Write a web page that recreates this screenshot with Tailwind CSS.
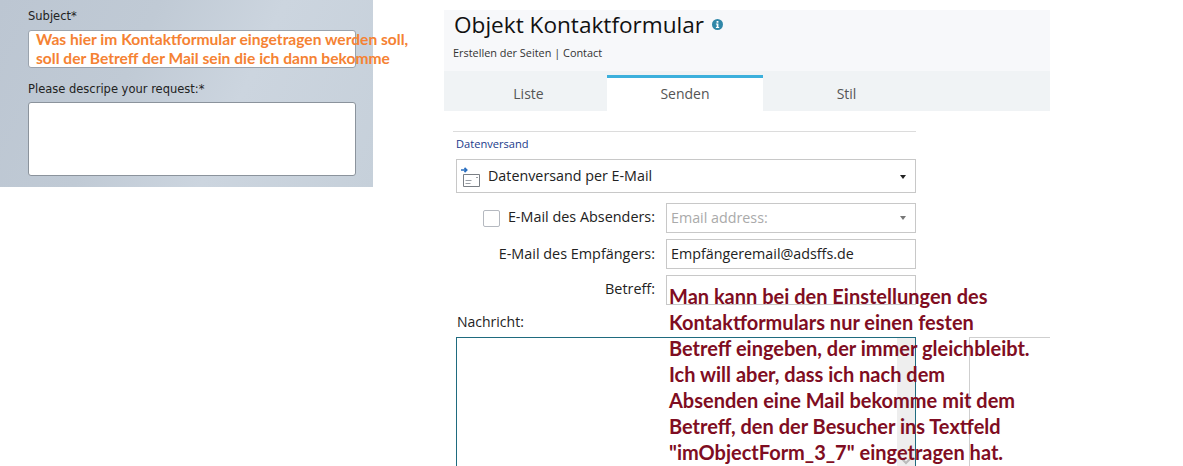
<!DOCTYPE html>
<html lang="de">
<head>
    <meta charset="UTF-8">
    <title>Objekt Kontaktformular</title>
    <script src="https://cdn.jsdelivr.net/npm/@tailwindcss/browser@4"></script>
</head>
<body class="bg-white">
    <div class="relative flex w-[1183px] h-[466px] overflow-hidden bg-white font-['Open_Sans',sans-serif] text-[#222]">
        <!-- left: form preview -->
        <div class="w-[373px] h-[187px] shrink-0 px-[28px] pt-[8px] bg-[linear-gradient(115deg,#bcc6d2_0%,#c0cad5_35%,#ccd5df_62%,#c6d0da_100%)] font-['DejaVu_Sans',sans-serif] text-[11.5px] text-[#222]">
            <p class="h-[16px] leading-[16px]">Subject*</p>
            <div class="mt-[6px] w-[328px] h-[38px] bg-white border border-[#9aa3ad] rounded-[3px]"></div>
            <p class="mt-[13px] h-[16px] leading-[16px]">Please descripe your request:*</p>
            <div class="mt-[5px] w-[328px] h-[74px] bg-white border border-[#8b939c] rounded-[3px]"></div>
        </div>

        <!-- right: settings window -->
        <div class="ml-[71px] w-[606px] shrink-0 mt-[10px]">
            <div class="h-[61px] bg-[#f7f8fa] px-[10px]">
                <div class="flex items-center h-[30px]">
                    <h1 class="text-[22.6px] leading-[28px] text-[#111] -mt-[1px]">Objekt Kontaktformular</h1>
                    <svg class="ml-[8px] -mt-[2px]" width="11" height="11" viewBox="0 0 11 11"><circle cx="5.5" cy="5.5" r="5.5" fill="#2f87a8"/><rect x="4.6" y="2" width="1.8" height="1.7" fill="#fff"/><path d="M3.9 4.6h2.5v3.3h.8v1H3.9v-1h.8V5.6h-.8z" fill="#fff"/></svg>
                </div>
                <p class="mt-[6px] -ml-[1px] text-[10.9px] leading-[14px] text-[#333]">Erstellen der Seiten | Contact</p>
            </div>
            <div class="flex h-[40px] bg-[#f0f3f5] text-[14px] text-[#555]">
                <div class="w-[163px] pl-[6px] pt-[13px] text-center leading-[20px]">Liste</div>
                <div class="w-[156px] mt-[4px] pt-[6px] border-t-[3px] border-[#3cb0dc] bg-white text-center leading-[20px]">Senden</div>
                <div class="w-[167px] pt-[13px] text-center leading-[20px]">Stil</div>
            </div>

            <div class="relative ml-[9px] w-[463px] mt-[20px] border-t border-[#dcdcdc]">
                <p class="ml-[3px] mt-[5px] text-[11.1px] leading-[14px] text-[#1a3a8a]">Datenversand</p>
                <div class="relative flex items-center ml-[3px] mt-[8px] w-[460px] h-[34px] border border-[#c8c8c8] text-[14.3px]">
                    <svg class="ml-[3px] mt-[-1px]" width="20" height="22" viewBox="0 0 20 22">
                        <path d="M1 5h5.5M4.5 2.8l2.2 2.2-2.2 2.2" fill="none" stroke="#2a6fc0" stroke-width="1.7"/>
                        <path d="M3.5 9.5H19.5v12H3.5z" fill="#fff" stroke="#7a7f85"/>
                        <path d="M5.5 15.5h6M5.5 18.5h5M16 12.5h2" stroke="#9a9fa5"/>
                    </svg>
                    <span class="ml-[8px]">Datenversand per E-Mail</span>
                    <span class="absolute right-[9px] top-[15px] border-x-[3.5px] border-x-transparent border-t-[4px] border-t-[#222]"></span>
                </div>

                <div class="mt-[10px] flex items-center h-[30px]">
                    <span class="ml-[30px] w-[17px] h-[17px] border border-[#b5b9c0] rounded-[2px]"></span>
                    <span class="w-[155px] text-right text-[14.4px] -mt-[2px]">E-Mail des Absenders:</span>
                    <div class="relative ml-[11px] w-[250px] h-[30px] border border-[#c8c8c8] pl-[4px] text-[14.3px] leading-[28px] text-[#aaa]">Email address:
                        <span class="absolute right-[9px] top-[12px] border-x-[3.5px] border-x-transparent border-t-[4px] border-t-[#777]"></span>
                    </div>
                </div>
                <div class="mt-[6px] flex items-center h-[30px]">
                    <span class="w-[202px] text-right text-[14.4px]">E-Mail des Empfängers:</span>
                    <div class="ml-[11px] w-[250px] h-[30px] border border-[#c8c8c8] pl-[4px] text-[14.3px] leading-[28px]">Empfängeremail@adsffs.de</div>
                </div>
                <div class="mt-[6px] flex items-start h-[30px]">
                    <span class="w-[202px] text-right text-[14.4px] leading-[28px]">Betreff:</span>
                    <div class="ml-[11px] w-[250px] h-[30px] border border-[#c8c8c8]"></div>
                </div>
                <p class="ml-[4px] mt-[8px] text-[14px] leading-[18px]">Nachricht:</p>
                <div class="relative ml-[3px] mt-[6px] w-[460px] h-[140px] border border-[#1f6b7f]">
                    <div class="absolute right-0 top-0 bottom-0 w-[18px] bg-[#eeeeee]">
                        <svg class="absolute left-[4px] top-[120px]" width="10" height="7" viewBox="0 0 10 7"><path d="M1 1l4 4 4-4" fill="none" stroke="#bbb" stroke-width="2"/></svg>
                    </div>
                </div>
            </div>
        </div>

        <!-- box behind the note -->
        <div class="absolute left-[969px] top-[337px] w-[81px] h-[129px] border-l border-t border-[#cfcfcf]"></div>

        <!-- annotations over the screenshots -->
        <p class="absolute left-[36px] top-[30px] font-['Lato',sans-serif] font-bold text-[15.6px] leading-[19px] text-[#f58233] whitespace-nowrap">Was hier im Kontaktformular eingetragen werden soll,<br>soll der Betreff der Mail sein die ich dann bekomme</p>
        <p class="absolute left-[669px] top-[283px] font-['Lato',sans-serif] font-bold text-[20px] leading-[26px] text-[#7f0d22] whitespace-nowrap">Man kann bei den Einstellungen des<br>Kontaktformulars nur einen festen<br>Betreff eingeben, der immer gleichbleibt.<br>Ich will aber, dass ich nach dem<br>Absenden eine Mail bekomme mit dem<br>Betreff, den der Besucher ins Textfeld<br>"imObjectForm_3_7" eingetragen hat.</p>
    </div>
</body>
</html>
